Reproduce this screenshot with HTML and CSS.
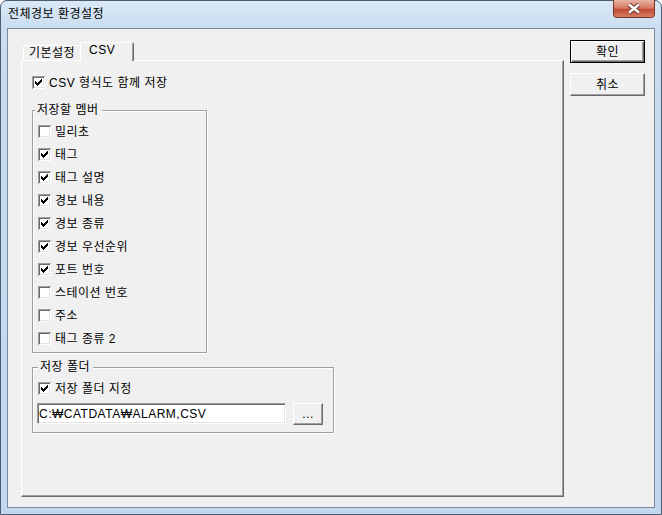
FILE: index.html
```html
<!DOCTYPE html>
<html lang="ko">
<head>
<meta charset="utf-8">
<title>전체경보 환경설정</title>
<link rel="stylesheet" href="styles.css">
</head>
<body>
<svg class="defs" width="0" height="0" aria-hidden="true">
  <defs>
    <symbol id="cb" viewBox="0 0 13 13">
      <rect width="13" height="13" fill="#fff"/>
      <path d="M0 0H13V1H1V13H0Z" fill="#a0a0a0"/>
      <path d="M1 1H12V2H2V12H1Z" fill="#696969"/>
      <path d="M11 2H12V12H2V11H11Z" fill="#e3e3e3"/>
    </symbol>
    <symbol id="cb-on" viewBox="0 0 13 13">
      <use href="#cb"/>
      <path d="M3 5V8H4V9H5V10H6V9H7V8H8V7H9V6H10V3H9V4H8V5H7V6H6V7H5V6H4V5Z" fill="#000"/>
    </symbol>
  </defs>
</svg>
<div class="window">
  <div class="titlebar">
    <span class="title">전체경보 환경설정</span>
    <span class="close">
      <svg width="42" height="18" viewBox="0 0 42 18">
        <defs>
          <linearGradient id="cg" x1="0" y1="0" x2="0" y2="1">
            <stop offset="0" stop-color="#eab2a4"/>
            <stop offset="0.45" stop-color="#d67a64"/>
            <stop offset="0.55" stop-color="#c14b33"/>
            <stop offset="1" stop-color="#d8806a"/>
          </linearGradient>
        </defs>
        <path d="M0.5 0V14.5Q0.5 17.5 3.5 17.5H38.5Q41.5 17.5 41.5 14.5V0" fill="url(#cg)" stroke="#7a3324"/>
        <path d="M16 4.5L26 12.5M26 4.5L16 12.5" stroke="#6b3026" stroke-width="4.4"/>
        <path d="M16 4.5L26 12.5M26 4.5L16 12.5" stroke="#fff" stroke-width="2.6"/>
      </svg>
    </span>
  </div>
  <div class="client">
    <div class="tabctl">
      <div class="tabstrip">
        <div class="tab">기본설정</div>
        <div class="tab active">CSV</div>
      </div>
      <div class="panel">
        <div class="check-row"><svg class="cb" width="13" height="13"><use href="#cb-on"/></svg><span>CSV 형식도 함께 저장</span></div>
        <fieldset class="group members">
          <legend>저장할 멤버</legend>
          <div class="check-row"><svg class="cb" width="13" height="13"><use href="#cb"/></svg><span>밀리초</span></div>
          <div class="check-row"><svg class="cb" width="13" height="13"><use href="#cb-on"/></svg><span>태그</span></div>
          <div class="check-row"><svg class="cb" width="13" height="13"><use href="#cb-on"/></svg><span>태그 설명</span></div>
          <div class="check-row"><svg class="cb" width="13" height="13"><use href="#cb-on"/></svg><span>경보 내용</span></div>
          <div class="check-row"><svg class="cb" width="13" height="13"><use href="#cb-on"/></svg><span>경보 종류</span></div>
          <div class="check-row"><svg class="cb" width="13" height="13"><use href="#cb-on"/></svg><span>경보 우선순위</span></div>
          <div class="check-row"><svg class="cb" width="13" height="13"><use href="#cb-on"/></svg><span>포트 번호</span></div>
          <div class="check-row"><svg class="cb" width="13" height="13"><use href="#cb"/></svg><span>스테이션 번호</span></div>
          <div class="check-row"><svg class="cb" width="13" height="13"><use href="#cb"/></svg><span>주소</span></div>
          <div class="check-row"><svg class="cb" width="13" height="13"><use href="#cb"/></svg><span>태그 종류 2</span></div>
        </fieldset>
        <fieldset class="group folder">
          <legend>저장 폴더</legend>
          <div class="check-row"><svg class="cb" width="13" height="13"><use href="#cb-on"/></svg><span>저장 폴더 지정</span></div>
          <div class="path-row">
            <div class="textbox">C:₩CATDATA₩ALARM,CSV</div>
            <div class="btn browse">...</div>
          </div>
        </fieldset>
      </div>
    </div>
    <div class="buttons">
      <div class="btn default">확인</div>
      <div class="btn">취소</div>
    </div>
  </div>
</div>
</body>
</html>
```
FILE: styles.css
```css
* { box-sizing: border-box; }
html, body { margin: 0; padding: 0; }
body {
  width: 662px;
  height: 515px;
  overflow: hidden;
  font-family: "Liberation Sans", "Noto Sans CJK KR", sans-serif;
  font-size: 12px;
  line-height: 14px;
  letter-spacing: 0.5px;
  color: #000;
  background: #fff;
}
.defs { position: absolute; width: 0; height: 0; overflow: hidden; }

.window {
  width: 662px;
  height: 515px;
  display: flex;
  flex-direction: column;
  border: 1px solid #4a5d72;
  border-radius: 7px 7px 0 0;
  background: linear-gradient(to bottom, #dae8f6 0, #c9dcf0 30px, #c2d8ef 100%);
  padding: 0 6px 6px 6px;
}
.titlebar { height: 27px; display: flex; align-items: flex-start; }
.title { padding-left: 1px; margin-top: 6px; }
.close { margin-left: auto; margin-top: -1px; width: 42px; height: 18px; display: block; }
.close svg { display: block; }

.client {
  flex: 1;
  display: flex;
  align-items: flex-start;
  background: #f0f0f0;
  border: 1px solid #7d8a99;
}

.tabctl { margin: 13px 0 0 13px; width: 543px; }
.tabstrip { display: flex; align-items: flex-end; height: 18px; padding-left: 2px; }
.tab {
  height: 15px;
  width: 59px;
  padding-left: 5px;
  border: 1px solid;
  border-bottom: none;
  border-color: #fff #696969 #fff #fff;
  border-radius: 2px 2px 0 0;
  background: #f0f0f0;
  white-space: nowrap;
}
.tab.active {
  height: 19px;
  width: 54px;
  margin-left: -2px;
  margin-bottom: -1px;
  padding-left: 8px;
  position: relative;
  z-index: 1;
  box-shadow: inset -1px 0 #a0a0a0;
}
.panel {
  height: 437px;
  border: 1px solid;
  border-color: #fff #696969 #696969 #fff;
  box-shadow: inset -1px -1px #a0a0a0;
  padding: 10px 0 0 10px;
}

.check-row { display: flex; align-items: center; gap: 4px; height: 23px; white-space: nowrap; }
.cb { display: block; flex: none; }

.group {
  margin: 9px 0 0 0;
  padding: 3px 0 2px 5px;
  border: 1px solid #a0a0a0;
  box-shadow: inset 1px 1px #fff, 1px 1px #fff;
  min-width: 0;
}
.group legend {
  padding: 0 3px 0 2px;
  margin-left: -3px;
  background: #f0f0f0;
  line-height: 14px;
}
.members { width: 175px; }
.folder { width: 302px; margin-top: 7px; padding-bottom: 7px; }
.folder legend { margin-left: 0; }

.path-row { display: flex; margin-top: 3px; }
.textbox {
  width: 249px;
  height: 21px;
  margin-left: -1px;
  padding-left: 1px;
  display: flex;
  align-items: center;
  background: #fff;
  border: 1px solid;
  border-color: #a0a0a0 #fff #fff #a0a0a0;
  box-shadow: inset 1px 1px #696969, inset -1px -1px #e3e3e3;
  white-space: nowrap;
}

.btn {
  display: flex;
  align-items: center;
  justify-content: center;
  background: #f0f0f0;
  border: 1px solid;
  border-color: #fff #696969 #696969 #fff;
  box-shadow: inset -1px -1px #a0a0a0;
  white-space: nowrap;
}
.btn.default {
  border-color: #000;
  box-shadow: inset 1px 1px #fff, inset -1px -1px #696969, inset -2px -2px #a0a0a0;
}
.browse { width: 30px; height: 22px; margin-left: 7px; }

.buttons { display: flex; flex-direction: column; gap: 10px; width: 75px; margin: 11px 0 0 6px; }
.buttons .btn { height: 23px; }
```
